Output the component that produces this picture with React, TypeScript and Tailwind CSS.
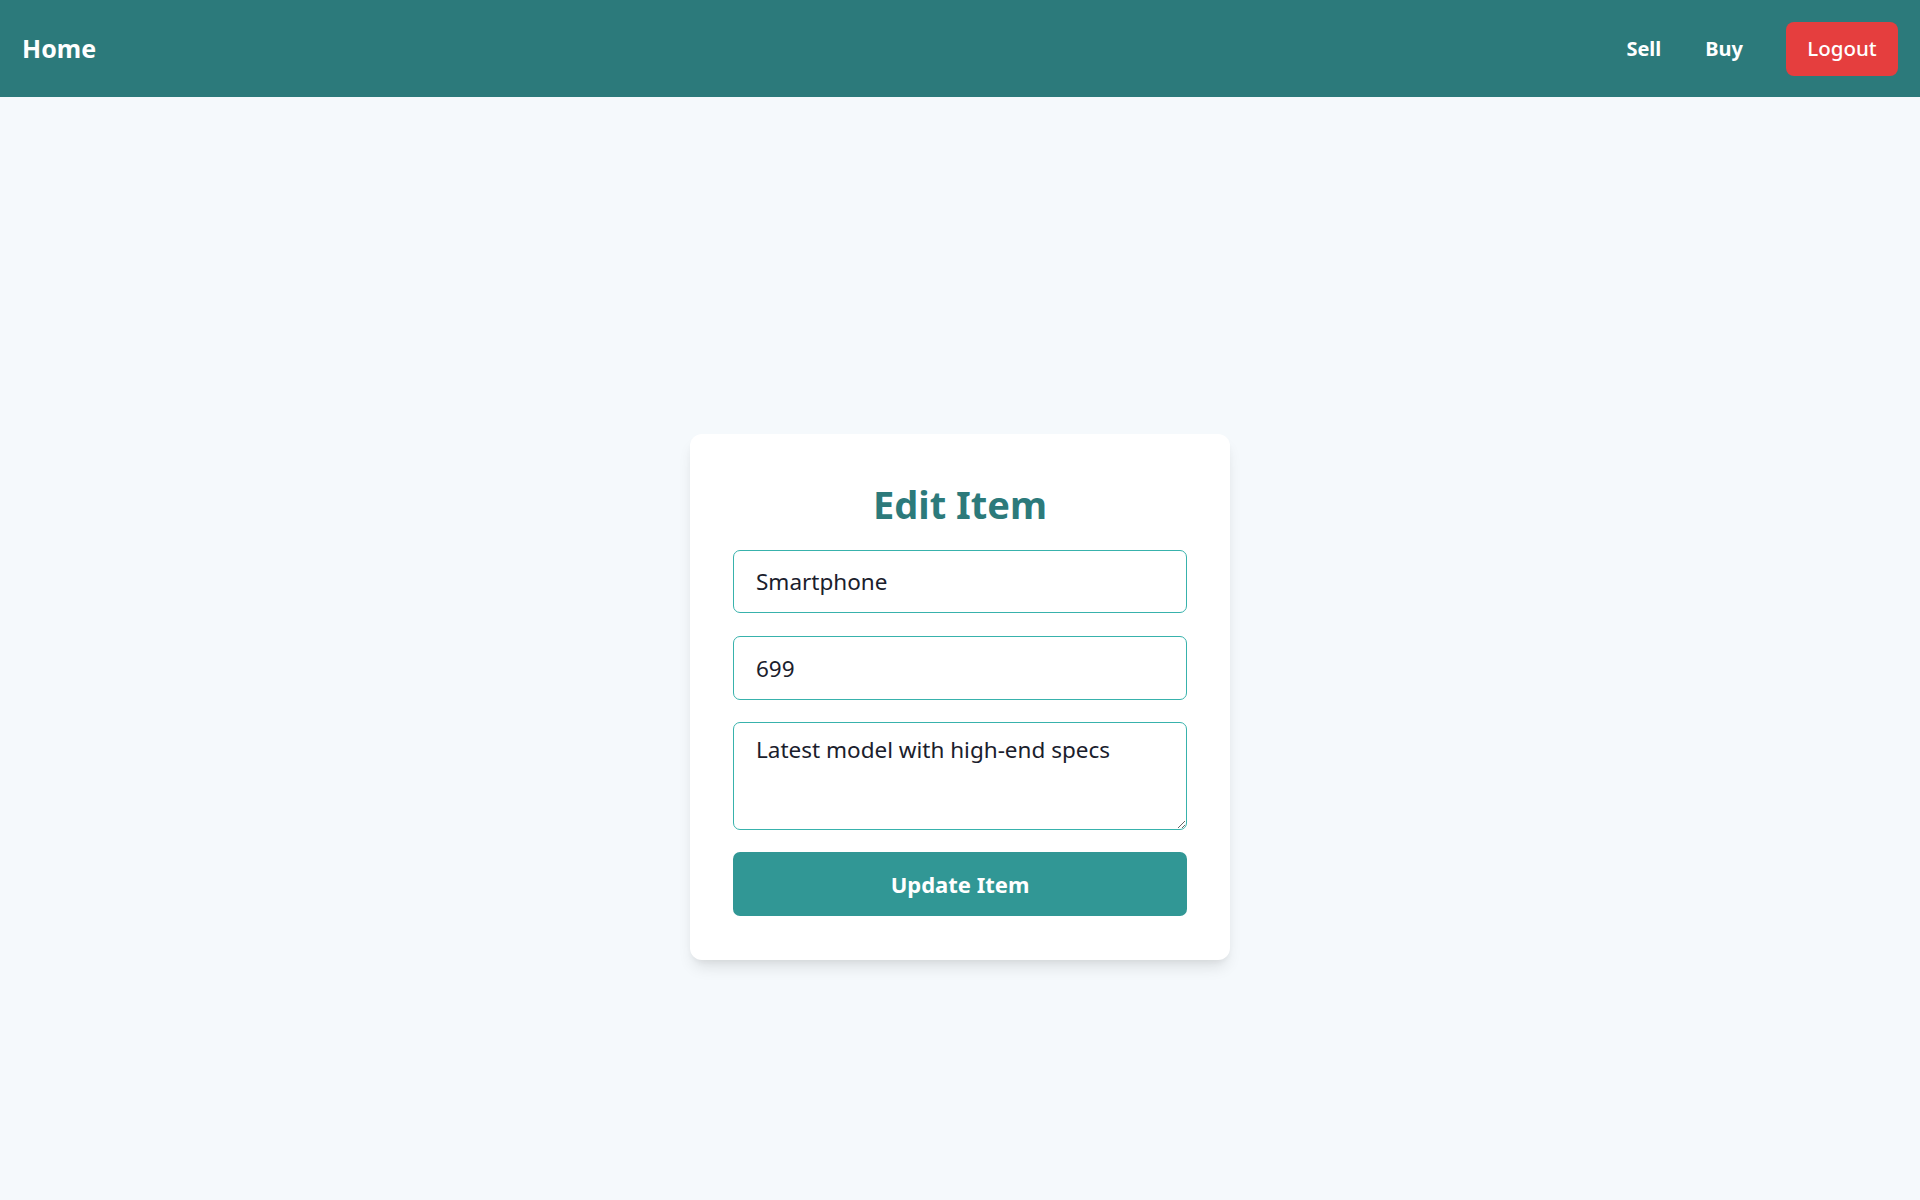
import React, { useState } from "react";

const font = { fontFamily: '"Noto Sans", "Open Sans", sans-serif' };

const Navbar: React.FC = () => {
  return (
    <nav className="bg-[#2c7a7b] h-[97px] px-[22px] flex items-center justify-between text-white">
      <a href="#" className="text-[25px] font-bold leading-none">
        Home
      </a>
      <div className="flex items-center">
        <a href="#" className="text-[20px] font-bold mr-[44px]">
          Sell
        </a>
        <a href="#" className="text-[20px] font-bold mr-[43px]">
          Buy
        </a>
        <button className="bg-[#e53e3e] w-[112px] h-[54px] rounded-[8px] text-[20.5px] font-medium">
          Logout
        </button>
      </div>
    </nav>
  );
};

const EditItem: React.FC = () => {
  const [values, setValues] = useState({
    name: "Smartphone",
    price: "699",
    description: "Latest model with high-end specs",
  });

  const handleChange = (
    e: React.ChangeEvent<HTMLInputElement | HTMLTextAreaElement>
  ) => {
    setValues({ ...values, [e.target.name]: e.target.value });
  };

  return (
    <div className="bg-white w-[540px] px-[43px] pt-[45px] pb-[44px] rounded-[12px] shadow-[0_10px_15px_-3px_rgba(0,0,0,0.1),0_4px_6px_-2px_rgba(0,0,0,0.05)]">
      <h2 className="text-center text-[38px] font-bold text-[#2c7a7b] leading-[50px] mb-[21px]">
        Edit Item
      </h2>
      <form onSubmit={(e) => e.preventDefault()} className="flex flex-col">
        <input
          type="text"
          name="name"
          value={values.name}
          onChange={handleChange}
          className="h-[63px] px-[22px] border border-[#38b2ac] rounded-[7px] text-[22.5px] text-[#1a202c] outline-none mb-[23px]"
        />
        <input
          type="number"
          name="price"
          value={values.price}
          onChange={handleChange}
          className="h-[64px] px-[22px] border border-[#38b2ac] rounded-[7px] text-[22.5px] text-[#1a202c] outline-none mb-[22px] [appearance:textfield]"
        />
        <textarea
          name="description"
          value={values.description}
          onChange={handleChange}
          className="h-[108px] px-[22px] pt-[10px] border border-[#38b2ac] rounded-[7px] text-[22.5px] text-[#1a202c] outline-none mb-[22px] leading-[34px]"
        />
        <button
          type="submit"
          className="h-[64px] bg-[#319795] text-white rounded-[7px] text-[22px] font-bold"
        >
          Update Item
        </button>
      </form>
    </div>
  );
};

export default function App() {
  return (
    <div className="bg-[#f5f9fc] min-h-screen" style={font}>
      <Navbar />
      <main className="min-h-screen flex items-center justify-center">
        <EditItem />
      </main>
    </div>
  );
}
